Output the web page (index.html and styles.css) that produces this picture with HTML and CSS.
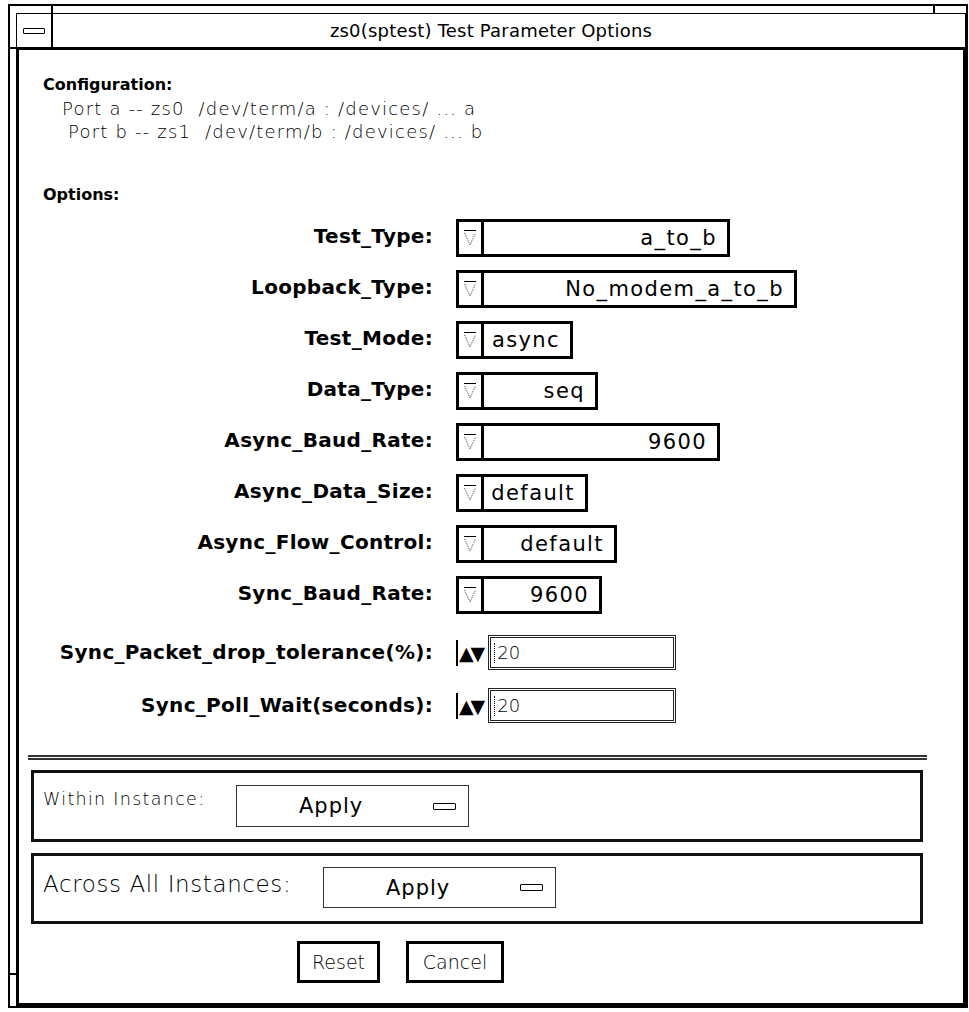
FILE: index.html
```html
<!DOCTYPE html>
<html lang="en">
<head>
  <meta charset="UTF-8">
  <title>zs0(sptest) Test Parameter Options</title>
  <link rel="stylesheet" href="styles.css">
</head>
<body>

  <div class="window">
    <!-- resize corner marks -->
    <span class="tick tick-top tick-left"></span>
    <span class="tick tick-top tick-right"></span>
    <span class="tick tick-bottom tick-left"></span>
    <span class="tick tick-bottom tick-right"></span>
    <span class="tick tick-side tick-side-top"></span>
    <span class="tick tick-side tick-side-bottom"></span>

    <div class="titlebar">
      <div class="menu-btn"><span class="menu-mark"></span></div>
      <div class="title">zs0(sptest) Test Parameter Options</div>
    </div>

    <div class="pane">

      <div class="config">
        <div class="heading">Configuration:</div>
        <div class="port port-a">Port a -- zs0 &nbsp;/dev/term/a : /devices/ ... a</div>
        <div class="port port-b">Port b -- zs1 &nbsp;/dev/term/b : /devices/ ... b</div>
      </div>

      <div class="heading options-heading">Options:</div>

      <div class="options">
        <div class="opt-row">
          <div class="opt-label">Test_Type:</div>
          <div class="choice w-test-type">
            <span class="choice-arrow"><svg width="14" height="22" viewBox="0 0 14 22"><line x1="1" y1="3.5" x2="13" y2="3.5" stroke="#000" stroke-width="1"/><polyline points="1.5,6 7,18 12.5,6" fill="none" stroke="#444" stroke-width="1" stroke-dasharray="1 1"/></svg></span>
            <span class="choice-value">a_to_b</span>
          </div>
        </div>
        <div class="opt-row">
          <div class="opt-label">Loopback_Type:</div>
          <div class="choice w-loopback">
            <span class="choice-arrow"><svg width="14" height="22" viewBox="0 0 14 22"><line x1="1" y1="3.5" x2="13" y2="3.5" stroke="#000" stroke-width="1"/><polyline points="1.5,6 7,18 12.5,6" fill="none" stroke="#444" stroke-width="1" stroke-dasharray="1 1"/></svg></span>
            <span class="choice-value">No_modem_a_to_b</span>
          </div>
        </div>
        <div class="opt-row">
          <div class="opt-label">Test_Mode:</div>
          <div class="choice w-test-mode">
            <span class="choice-arrow"><svg width="14" height="22" viewBox="0 0 14 22"><line x1="1" y1="3.5" x2="13" y2="3.5" stroke="#000" stroke-width="1"/><polyline points="1.5,6 7,18 12.5,6" fill="none" stroke="#444" stroke-width="1" stroke-dasharray="1 1"/></svg></span>
            <span class="choice-value">async</span>
          </div>
        </div>
        <div class="opt-row">
          <div class="opt-label">Data_Type:</div>
          <div class="choice w-data-type">
            <span class="choice-arrow"><svg width="14" height="22" viewBox="0 0 14 22"><line x1="1" y1="3.5" x2="13" y2="3.5" stroke="#000" stroke-width="1"/><polyline points="1.5,6 7,18 12.5,6" fill="none" stroke="#444" stroke-width="1" stroke-dasharray="1 1"/></svg></span>
            <span class="choice-value">seq</span>
          </div>
        </div>
        <div class="opt-row">
          <div class="opt-label">Async_Baud_Rate:</div>
          <div class="choice w-async-baud">
            <span class="choice-arrow"><svg width="14" height="22" viewBox="0 0 14 22"><line x1="1" y1="3.5" x2="13" y2="3.5" stroke="#000" stroke-width="1"/><polyline points="1.5,6 7,18 12.5,6" fill="none" stroke="#444" stroke-width="1" stroke-dasharray="1 1"/></svg></span>
            <span class="choice-value">9600</span>
          </div>
        </div>
        <div class="opt-row">
          <div class="opt-label">Async_Data_Size:</div>
          <div class="choice w-data-size">
            <span class="choice-arrow"><svg width="14" height="22" viewBox="0 0 14 22"><line x1="1" y1="3.5" x2="13" y2="3.5" stroke="#000" stroke-width="1"/><polyline points="1.5,6 7,18 12.5,6" fill="none" stroke="#444" stroke-width="1" stroke-dasharray="1 1"/></svg></span>
            <span class="choice-value">default</span>
          </div>
        </div>
        <div class="opt-row">
          <div class="opt-label">Async_Flow_Control:</div>
          <div class="choice w-flow">
            <span class="choice-arrow"><svg width="14" height="22" viewBox="0 0 14 22"><line x1="1" y1="3.5" x2="13" y2="3.5" stroke="#000" stroke-width="1"/><polyline points="1.5,6 7,18 12.5,6" fill="none" stroke="#444" stroke-width="1" stroke-dasharray="1 1"/></svg></span>
            <span class="choice-value">default</span>
          </div>
        </div>
        <div class="opt-row">
          <div class="opt-label">Sync_Baud_Rate:</div>
          <div class="choice w-sync-baud">
            <span class="choice-arrow"><svg width="14" height="22" viewBox="0 0 14 22"><line x1="1" y1="3.5" x2="13" y2="3.5" stroke="#000" stroke-width="1"/><polyline points="1.5,6 7,18 12.5,6" fill="none" stroke="#444" stroke-width="1" stroke-dasharray="1 1"/></svg></span>
            <span class="choice-value">9600</span>
          </div>
        </div>

        <div class="opt-row spin-row first-spin">
          <div class="opt-label">Sync_Packet_drop_tolerance(%):</div>
          <div class="spinner">
            <span class="spin-arrows">&#9650;&#9660;</span>
            <span class="spin-field"><span class="caret"></span>20</span>
          </div>
        </div>
        <div class="opt-row spin-row">
          <div class="opt-label">Sync_Poll_Wait(seconds):</div>
          <div class="spinner">
            <span class="spin-arrows">&#9650;&#9660;</span>
            <span class="spin-field"><span class="caret"></span>20</span>
          </div>
        </div>
      </div>

      <div class="separator"></div>

      <div class="apply-box">
        <div class="apply-label small">Within Instance:</div>
        <button class="apply-btn">Apply <span class="menu-mark"></span></button>
      </div>
      <div class="apply-box second">
        <div class="apply-label">Across All Instances:</div>
        <button class="apply-btn">Apply <span class="menu-mark"></span></button>
      </div>

      <div class="footer">
        <button class="plain-btn reset">Reset</button>
        <button class="plain-btn cancel">Cancel</button>
      </div>

    </div>
  </div>

</body>
</html>
```

FILE: styles.css
```css
body {
  margin: 0;
  background-color: #fff;
  color: #000;
  font-family: 'DejaVu Sans', sans-serif;
}

.window {
  position: relative;
  box-sizing: border-box;
  width: 960px;
  height: 1004px;
  margin: 4px 0 0 8px;
  border: 2px solid #000;
  padding: 7px 0 0 6px;
  display: flex;
  flex-direction: column;
}

/* little resize marks on the frame */
.tick {
  position: absolute;
  background-color: #000;
}

.tick-top {
  top: 0;
  width: 2px;
  height: 7px;
}

.tick-bottom {
  bottom: -2px;
  width: 2px;
  height: 4px;
}

.tick-left {
  left: 41px;
}

.tick-right {
  left: 923px;
}

.tick-side {
  left: 0;
  width: 6px;
  height: 2px;
}

.tick-side-top {
  top: 41px;
}

.tick-side-bottom {
  top: 967px;
}

.titlebar {
  display: flex;
  height: 34px;
  box-sizing: border-box;
  border: 1px solid #000;
  border-bottom: none;
}

.menu-btn {
  width: 36px;
  box-sizing: border-box;
  border-right: 2px solid #000;
  display: flex;
  align-items: center;
  justify-content: center;
}

.menu-mark {
  display: inline-block;
  width: 20px;
  height: 4px;
  border: 1px solid #000;
  border-radius: 1px;
}

.title {
  flex: 1;
  padding-right: 36px;
  text-align: center;
  font-size: 18px;
  line-height: 33px;
  letter-spacing: 0.2px;
}

.pane {
  flex: 1;
  border: 3px solid #000;
  display: flex;
  flex-direction: column;
}

.heading {
  font-size: 16px;
  font-weight: bold;
  line-height: 18px;
  padding-left: 24px;
}

.config {
  padding-top: 26px;
}

.port {
  font-size: 18px;
  font-weight: 200;
  line-height: 23px;
  letter-spacing: 1.2px;
  white-space: pre;
}

.port-a {
  padding-left: 43px;
  margin-top: 3px;
}

.port-b {
  padding-left: 49px;
}

.options-heading {
  margin-top: 43px;
}

.options {
  margin-top: 15px;
}

.opt-row {
  display: flex;
  align-items: flex-start;
  height: 38px;
  margin-bottom: 13px;
}

.opt-label {
  width: 414px;
  text-align: right;
  font-size: 20px;
  font-weight: bold;
  line-height: 24px;
  letter-spacing: 0.3px;
  padding-top: 5px;
}

.choice {
  margin-left: 23px;
  height: 38px;
  box-sizing: border-box;
  border: 3px solid #000;
  display: flex;
}

.choice-arrow {
  width: 22px;
  border-right: 3px solid #000;
  display: flex;
  align-items: center;
  justify-content: center;
}

.choice-value {
  flex: 1;
  text-align: right;
  padding: 0 10px 0 6px;
  font-size: 21px;
  line-height: 33px;
  letter-spacing: 1.4px;
  white-space: nowrap;
}

.w-test-type { width: 274px; }
.w-loopback { width: 341px; }
.w-test-mode { width: 117px; }
.w-data-type { width: 142px; }
.w-async-baud { width: 264px; }
.w-data-size { width: 132px; }
.w-flow { width: 161px; }
.w-sync-baud { width: 146px; }

.spin-row {
  height: 35px;
  margin-bottom: 18px;
}

/* collapses with the row gap above */
.first-spin {
  margin-top: 21px;
}

.spinner {
  margin-left: 23px;
  width: 220px;
  height: 35px;
  box-sizing: border-box;
  display: flex;
  align-items: center;
}

.spin-arrows {
  font-size: 19px;
  letter-spacing: -3px;
  padding: 0 6px 0 1px;
  border-left: 2px solid #000;
  height: 26px;
  line-height: 26px;
}

.spin-field {
  flex: 1;
  height: 100%;
  box-sizing: border-box;
  border: 3px double #222;
  display: flex;
  align-items: center;
  font-size: 18px;
  font-weight: 200;
}

.caret {
  width: 0;
  height: 20px;
  border-left: 1px dotted #000;
  margin: 0 2px 0 3px;
}

.separator {
  margin: 14px 36px 0 9px;
  height: 1px;
  border-top: 2px solid #333;
  border-bottom: 2px solid #333;
}

.apply-box {
  margin: 10px 40px 0 12px;
  height: 72px;
  box-sizing: border-box;
  border: 3px solid #111;
  display: flex;
  align-items: flex-start;
  padding: 12px 0 0 9px;
}

.apply-box.second {
  margin-top: 11px;
  height: 71px;
  padding-top: 11px;
}

.apply-label {
  width: 280px;
  font-size: 23px;
  font-weight: 300;
  letter-spacing: 0.6px;
  line-height: 30px;
  padding-top: 2px;
}

.apply-label.small {
  width: 193px;
  font-size: 17.5px;
  letter-spacing: 1.3px;
  line-height: 20px;
  padding-top: 4px;
}

.apply-btn {
  box-sizing: border-box;
  width: 233px;
  height: 42px;
  border: 1px solid #333;
  background: #fff;
  font-family: 'DejaVu Sans', sans-serif;
  font-size: 21px;
  letter-spacing: 1px;
  padding: 0 12px 0 62px;
  display: flex;
  align-items: center;
  justify-content: space-between;
}

.apply-btn .menu-mark {
  width: 21px;
  height: 5px;
}

.second .apply-btn {
  height: 41px;
}

.footer {
  display: flex;
  gap: 26px;
  padding-left: 278px;
  margin-top: 17px;
}

.plain-btn {
  box-sizing: border-box;
  height: 42px;
  border: 3px solid #000;
  background: #fff;
  font-family: 'DejaVu Sans', sans-serif;
  font-size: 19px;
  font-weight: 200;
  color: #000;
}

.reset {
  width: 83px;
}

.cancel {
  width: 98px;
}
```
